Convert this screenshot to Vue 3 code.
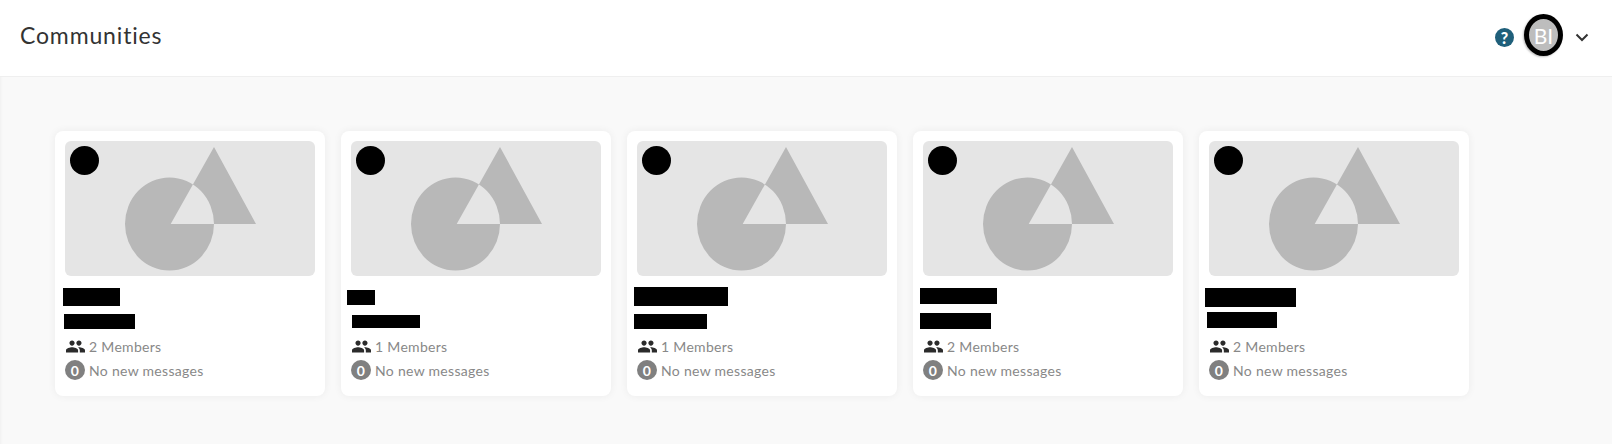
<script setup>
// name and sub are the blacked-out labels, which sit a little differently on each card
const communities = [
  { members: 2, name: { w: 57, h: 18, x: -2, y: 12 }, sub: { w: 71, h: 15, x: -1, y: 8 } },
  { members: 1, name: { w: 28, h: 15, x: -4, y: 14 }, sub: { w: 68, h: 13, x: 1, y: 10 } },
  { members: 1, name: { w: 94, h: 19, x: -3, y: 11 }, sub: { w: 73, h: 15, x: -3, y: 8 } },
  { members: 2, name: { w: 77, h: 16, x: -3, y: 12 }, sub: { w: 71, h: 16, x: -3, y: 9 } },
  { members: 2, name: { w: 91, h: 19, x: -4, y: 12 }, sub: { w: 70, h: 16, x: -2, y: 5 } },
]

function barStyle(b) {
  return { width: b.w + 'px', height: b.h + 'px', marginLeft: b.x + 'px', marginTop: b.y + 'px' }
}
</script>

<template>
  <div class="page">
    <header class="topbar">
      <h1 class="title">Communities</h1>
      <div class="user">
        <span class="help">?</span>
        <span class="avatar">BI</span>
        <svg class="chevron" width="14" height="9" viewBox="0 0 14 9">
          <path d="M1.5 1.5 7 7l5.5-5.5" fill="none" stroke="#333" stroke-width="2" />
        </svg>
      </div>
    </header>

    <main class="cards">
      <article v-for="(c, i) in communities" :key="i" class="card">
        <div class="cover">
          <span class="dot"></span>
          <svg class="art" width="250" height="135" viewBox="0 0 250 135">
            <path
              fill="#b8b8b8"
              fill-rule="evenodd"
              d="M104.500 36.500a44.500 46.500 0 1 0 44.500 46.500 44.500 46.500 0 0 0-44.500-46.500ZM149 6 191 83H105.700Z"
            />
          </svg>
        </div>
        <div class="labels">
          <div class="bar" :style="barStyle(c.name)"></div>
          <div class="bar" :style="barStyle(c.sub)"></div>
        </div>
        <div class="meta">
          <svg class="people" width="19" height="13" viewBox="1 5 22 14">
            <path
              fill="#2b2b2b"
              d="M16 11c1.660 0 2.990-1.340 2.990-3S17.660 5 16 5s-3 1.340-3 3 1.340 3 3 3Zm-8 0c1.660 0 2.990-1.340 2.990-3S9.660 5 8 5 5 6.340 5 8s1.340 3 3 3Zm0 2c-2.330 0-7 1.170-7 3.500V19h14v-2.500C15 14.170 10.330 13 8 13Zm8 0c-.290 0-.620.020-.970.050C16.190 13.890 17 15.020 17 16.500V19h6v-2.500c0-2.330-4.670-3.500-7-3.500Z"
            />
          </svg>
          <span>{{ c.members }} Members</span>
        </div>
        <div class="meta">
          <span class="count">0</span>
          <span>No new messages</span>
        </div>
      </article>
    </main>
  </div>
</template>

<style scoped>
.page {
  height: 444px;
  box-sizing: border-box;
  background: #f9f9f9;
  box-shadow: inset 3px 0 3px -2px rgba(0, 0, 0, 0.04);
  font-family: Lato, "Open Sans", sans-serif;
}

.topbar {
  height: 77px;
  box-sizing: border-box;
  background: #fff;
  border-bottom: 1px solid #efefef;
  display: flex;
  align-items: center;
  justify-content: space-between;
  padding: 0 23px 6px 20px;
}

.title {
  margin: 0;
  font-size: 23px;
  font-weight: 400;
  letter-spacing: 0.85px;
  color: #333;
}

.user {
  display: flex;
  align-items: center;
}

.help {
  width: 19px;
  height: 19px;
  border-radius: 50%;
  background: #1f5f7a;
  color: #fff;
  font-size: 16px;
  font-weight: 900;
  display: flex;
  align-items: center;
  justify-content: center;
  margin-top: 5px;
  margin-right: 10px;
}

.avatar {
  width: 39px;
  height: 42px;
  box-sizing: border-box;
  border: 5px solid #000;
  border-radius: 50%;
  background: #bdbdbd;
  box-shadow: -1px 1px 2px rgba(0, 0, 0, 0.25);
  color: #fff;
  font-size: 21px;
  font-weight: 400;
  display: flex;
  align-items: center;
  justify-content: center;
  margin-right: 12px;
}

.chevron {
  margin-top: 4px;
}

.cards {
  display: flex;
  gap: 16px;
  padding: 54px 0 0 55px;
}

.card {
  width: 270px;
  height: 265px;
  box-sizing: border-box;
  padding: 10px;
  background: #fff;
  border-radius: 8px;
  box-shadow: 0 0 8px rgba(0, 0, 0, 0.06);
}

.cover {
  position: relative;
  height: 135px;
  background: #e5e5e5;
  border-radius: 6px;
}

.art {
  display: block;
}

.dot {
  position: absolute;
  left: 5px;
  top: 5px;
  width: 29px;
  height: 29px;
  border-radius: 50%;
  background: #000;
}

.labels {
  height: 58px;
  overflow: hidden;
  margin-left: -10px;
  padding-left: 10px;
}

.bar {
  background: #000;
}

.meta {
  height: 24px;
  display: flex;
  align-items: center;
  font-size: 14px;
  color: #888;
  letter-spacing: 0.3px;
}

.people {
  margin-left: 1px;
  margin-right: 4px;
}

.count {
  width: 20px;
  height: 20px;
  border-radius: 50%;
  background: #808080;
  color: #fff;
  font-size: 14px;
  font-weight: 700;
  display: flex;
  align-items: center;
  justify-content: center;
  margin-right: 4px;
}
</style>

<style>
html, body {
  margin: 0;
  background: #f9f9f9;
}
</style>
